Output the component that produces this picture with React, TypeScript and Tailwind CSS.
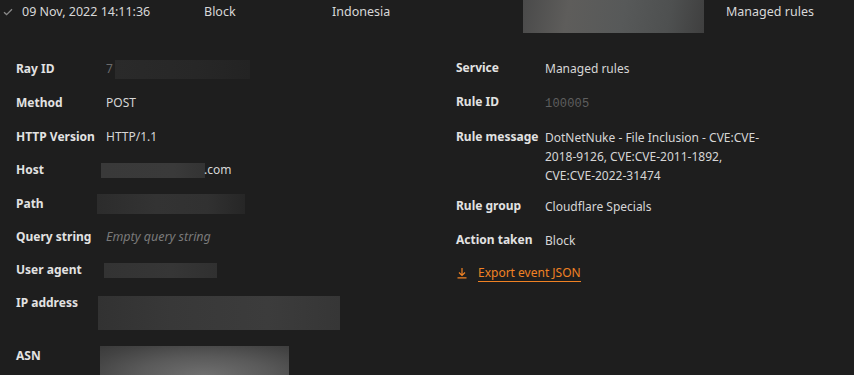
import React from "react";

const font = { fontFamily: '"Noto Sans", "Open Sans", sans-serif' };

function Blur({ className }: { className: string }) {
  return <div className={className} />;
}

function Row({ label, children, className = "" }: { label: string; children: React.ReactNode; className?: string }) {
  return (
    <div className={`flex items-start ${className}`}>
      <div className="w-[90px] shrink-0 h-5 leading-5 text-[12px] font-bold text-[#e2e2e2]">{label}</div>
      <div className="flex-1 min-w-0 text-[12px] leading-5 text-[#d6d6d6]">{children}</div>
    </div>
  );
}

function RRow({ label, children, className = "" }: { label: string; children: React.ReactNode; className?: string }) {
  return (
    <div className={`flex items-start ${className}`}>
      <div className="w-[89px] shrink-0 h-5 leading-5 text-[12px] font-bold text-[#e2e2e2]">{label}</div>
      <div className="flex-1 min-w-0 text-[12px] leading-[19px] pt-[1px] text-[#d6d6d6]">{children}</div>
    </div>
  );
}

export default function App() {
  return (
    <div className="w-[854px] h-[375px] overflow-hidden bg-[#1e1e1e]" style={font}>
      {/* header row */}
      <div className="flex items-start h-[33px] text-[12.5px] text-[#d8d8d8]">
        <div className="w-[22px] shrink-0 pl-[3px] pt-[8px]">
          <svg width="10" height="8" viewBox="0 0 10 8" fill="none">
            <path d="M1 4.2 L3.6 6.6 L9 1.2" stroke="#8a8a8a" strokeWidth="1.3" />
          </svg>
        </div>
        <div className="w-[182px] shrink-0 pt-[2px] leading-5">09 Nov, 2022 14:11:36</div>
        <div className="w-[128px] shrink-0 pt-[2px] leading-5">Block</div>
        <div className="w-[191px] shrink-0 pt-[2px] leading-5">Indonesia</div>
        <Blur className="w-[181px] h-[33px] shrink-0 bg-[linear-gradient(100deg,#4a4a4a_0%,#5e5d5b_25%,#575959_55%,#4e5050_80%,#3f3f3f_100%)]" />
        <div className="pl-[22px] pt-[2px] leading-5">Managed rules</div>
      </div>

      <div className="flex pt-[26px]">
        {/* left column */}
        <div className="w-[440px] shrink-0 pl-4 flex flex-col gap-[13.4px]">
          <Row label="Ray ID">
            <div className="flex items-center h-5">
              <span className="text-[12px] text-[#6a6a6a] w-[9px]">7</span>
              <Blur className="w-[135px] h-[19px] bg-[linear-gradient(90deg,#2a2a2a,#272727_60%,#232323)]" />
            </div>
          </Row>
          <Row label="Method" className="mt-[1px]">POST</Row>
          <Row label="HTTP Version">HTTP/1.1</Row>
          <Row label="Host">
            <div className="flex items-center h-5 -ml-[5px]">
              <Blur className="w-[104px] h-[15px] bg-[linear-gradient(90deg,#393939,#3a3a3a_70%,#333333)]" />
              <span className="-ml-[1px]">.com</span>
            </div>
          </Row>
          <Row label="Path">
            <div className="flex items-center h-5 -ml-[9px]">
              <Blur className="w-[148px] h-[20px] bg-[linear-gradient(90deg,#2c2c2c,#333333_40%,#313131_75%,#262626)]" />
            </div>
          </Row>
          <Row label="Query string">
            <span className="italic text-[#7a7a7a] text-[12.5px]">Empty query string</span>
          </Row>
          <Row label="User agent">
            <div className="flex items-center h-5 -ml-[2px]">
              <Blur className="w-[113px] h-[15px] bg-[linear-gradient(90deg,#333333,#363636_60%,#303030)]" />
            </div>
          </Row>
          <Row label="IP address" className="-mt-[1px]">
            <Blur className="-ml-[8px] mt-[3px] w-[242px] h-[34px] bg-[linear-gradient(90deg,#323232,#383838_30%,#3c3c3c_70%,#363636)]" />
          </Row>
          <Row label="ASN" className="mt-[3px]">
            <Blur className="-ml-[6px] w-[189px] h-[30px] bg-[radial-gradient(ellipse_at_55%_100%,#707070_0%,#5a5a5a_45%,#444444_80%,#3a3a3a_100%)]" />
          </Row>
        </div>

        {/* right column */}
        <div className="pl-4 flex flex-col gap-[14px] -mt-[1px]">
          <RRow label="Service">Managed rules</RRow>
          <RRow label="Rule ID">
            <span className="font-mono text-[12px] tracking-[0.2px] text-[#5f5f5f]">100005</span>
          </RRow>
          <RRow label="Rule message" className="-mt-[1px] -mb-[3px]">
            <div className="w-[222px]">
              DotNetNuke - File Inclusion - CVE:CVE-2018-9126, CVE:CVE-2011-1892, CVE:CVE-2022-31474
            </div>
          </RRow>
          <RRow label="Rule group">Cloudflare Specials</RRow>
          <RRow label="Action taken">Block</RRow>
          <div className="flex items-center h-5 -mt-[1px] text-[12px] text-[#f08224]">
            <svg width="12" height="12" viewBox="0 0 12 12" fill="none" className="mr-[10px]">
              <path d="M6 1 V8 M3 5.5 L6 8.5 L9 5.5 M1.5 10.8 H10.5" stroke="#f08224" strokeWidth="1.2" />
            </svg>
            <span className="border-b border-[#f08224] leading-[17px]">Export event JSON</span>
          </div>
        </div>
      </div>
    </div>
  );
}
